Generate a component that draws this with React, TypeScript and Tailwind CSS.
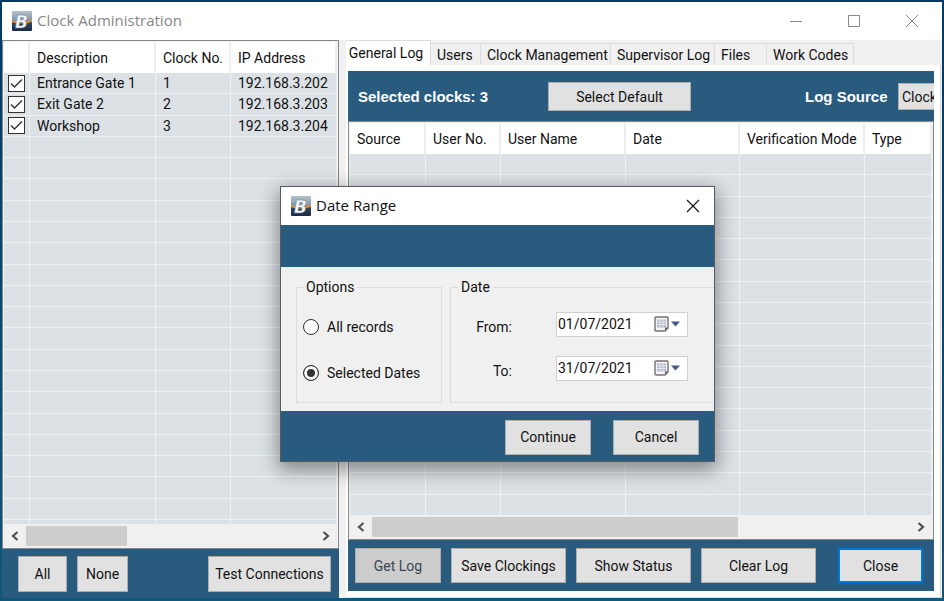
import { ReactNode } from "react";
import clsx from "clsx";

const clocks = [
  { name: "Entrance Gate 1", no: 1, ip: "192.168.3.202" },
  { name: "Exit Gate 2", no: 2, ip: "192.168.3.203" },
  { name: "Workshop", no: 3, ip: "192.168.3.204" },
];

const tabs = [
  { label: "Users", width: "w-[50px]" },
  { label: "Clock Management", width: "w-[130px]" },
  { label: "Supervisor Log", width: "w-[104px]" },
  { label: "Files", width: "w-[52px]" },
  { label: "Work Codes", width: "w-[87px]" },
];

const logColumns = [
  { label: "Source", width: "w-[76px]" },
  { label: "User No.", width: "w-[75px]" },
  { label: "User Name", width: "w-[125px]" },
  { label: "Date", width: "w-[114px]" },
  { label: "Verification Mode", width: "w-[125px]" },
  { label: "Type", width: "" },
];

const cell = "border-b border-r border-[#eef0f1] p-0";
const headCell =
  "h-[31px] border-r-2 border-[#eeeeee] bg-white p-0 pl-[7px] text-left font-normal";

const Logo = () => (
  <svg viewBox="0 0 20 20" className="size-5 shrink-0" aria-hidden="true">
    <defs>
      <linearGradient id="logo-bg" x1="0" y1="0" x2="0" y2="1">
        <stop offset="0" stopColor="#b4c3cd" />
        <stop offset="0.5" stopColor="#7d93a6" />
        <stop offset="0.62" stopColor="#2c4361" />
        <stop offset="1" stopColor="#1b2d47" />
      </linearGradient>
    </defs>
    <rect width="20" height="20" rx="1" fill="url(#logo-bg)" />
    <path d="M0 9.8 Q3 11.5 6 11.5 L14 11.5 Q17 11 20 9.2" stroke="#f08a24" strokeWidth="1.8" fill="none" />
    <text
      x="3"
      y="16.5"
      fontFamily="DejaVu Sans, sans-serif"
      fontSize="17"
      fontWeight="700"
      fontStyle="italic"
      fill="#f7fafc"
      stroke="#5f7488"
      strokeWidth="0.4"
    >
      B
    </text>
  </svg>
);

const CalendarIcon = () => (
  <svg viewBox="0 0 27 16" className="h-4 w-[27px] shrink-0" aria-hidden="true">
    <path d="M1 2 Q1 1 2 1 H13 Q14 1 14 2 V12 L11 15 H2 Q1 15 1 14 Z" fill="#f4f4f6" stroke="#7a6e6e" strokeWidth="1.4" />
    <path d="M3 3.5 H12 V11.5 H3 Z" fill="#b4bccb" />
    <path d="M3 6 H12 M3 8.5 H12 M6 3.5 V11.5 M9 3.5 V11.5" stroke="#eef0f5" strokeWidth="0.8" />
    <path d="M14 11.5 H11 V15 Z" fill="#6f6464" />
    <path d="M17 5.5 H26 L21.5 10.5 Z" fill="#41598c" />
  </svg>
);

type ButtonProps = {
  children: ReactNode;
  className?: string;
  disabled?: boolean;
  focused?: boolean;
};

const Button: React.FC<ButtonProps> = ({
  children,
  className,
  disabled,
  focused,
}) => (
  <button
    type="button"
    disabled={disabled}
    className={clsx(
      "flex shrink-0 items-center justify-center",
      disabled ? "bg-[#cccccc] text-[#3a4650]" : "bg-[#e1e1e1]",
      focused ? "border-2 border-[#0078d7]" : "border border-[#adadad]",
      className
    )}
  >
    {children}
  </button>
);

const Chevron = ({ left }: { left?: boolean }) => (
  <svg viewBox="0 0 8 10" className="h-[10px] w-2" aria-hidden="true">
    <path
      d={left ? "M6.5 1 L2 5 L6.5 9" : "M1.5 1 L6 5 L1.5 9"}
      fill="none"
      stroke="#505050"
      strokeWidth="2.2"
    />
  </svg>
);

type ScrollBarProps = {
  thumb: string;
};

const ScrollBar: React.FC<ScrollBarProps> = ({ thumb }) => (
  <div className="flex h-[22px] shrink-0 bg-[#f0f0f0] py-px">
    <button type="button" aria-label="Scroll left" className="flex w-[22px] items-center justify-center">
      <Chevron left />
    </button>
    <div className="flex-1">
      <div className={clsx("h-full bg-[#cdcdcd]", thumb)} />
    </div>
    <button type="button" aria-label="Scroll right" className="flex w-[22px] items-center justify-center">
      <Chevron />
    </button>
  </div>
);

const ClockList = () => (
  <section className="flex w-[337px] shrink-0 flex-col bg-[#295b7f]">
    <div className="flex min-h-0 flex-1 flex-col border border-[#828790] bg-[#f0f0f0] p-px">
      <div className="min-h-0 flex-1 overflow-hidden">
        <table className="h-full w-full table-fixed border-separate border-spacing-0 bg-[#dce1e5]">
          <thead>
            <tr>
              <th className={clsx(headCell, "w-[26px]")} />
              <th className={clsx(headCell, "w-[126px]")}>Description</th>
              <th className={clsx(headCell, "w-[75px]")}>Clock No.</th>
              <th className={headCell}>IP Address</th>
            </tr>
          </thead>
          <tbody>
            {clocks.map((clock) => (
              <tr key={clock.no} className="h-[21px]">
                <td className={cell}>
                  <label className="grid justify-center">
                    <input
                      type="checkbox"
                      defaultChecked
                      aria-label={clock.name}
                      className="peer col-start-1 row-start-1 size-[17px] appearance-none border border-[#333333] bg-white"
                    />
                    <svg viewBox="0 0 17 17" className="pointer-events-none invisible col-start-1 row-start-1 size-[17px] peer-checked:visible">
                      <path d="M3 8.5 L6.5 12 L14 4.5" fill="none" stroke="#333333" strokeWidth="1.4" />
                    </svg>
                  </label>
                </td>
                <td className={clsx(cell, "leading-5")}>
                  <span className="pl-[7px]">{clock.name}</span>
                </td>
                <td className={clsx(cell, "leading-5")}>
                  <span className="pl-[7px]">{clock.no}</span>
                </td>
                <td className={clsx(cell, "leading-5")}>
                  <span className="pl-[7px]">{clock.ip}</span>
                </td>
              </tr>
            ))}
            {Array.from({ length: 18 }, (_, i) => (
              <tr key={i} className="h-[21px]">
                <td className={cell} />
                <td className={cell} />
                <td className={cell} />
                <td className={cell} />
              </tr>
            ))}
            <tr className="h-[5px]">
              <td className={cell} />
              <td className={cell} />
              <td className={cell} />
              <td className={cell} />
            </tr>
          </tbody>
        </table>
      </div>
      <ScrollBar thumb="w-[35%]" />
    </div>
    <div className="flex shrink-0 gap-[10px] pt-[7px] pr-2 pb-[6px] pl-4">
      <Button className="h-9 w-[49px]">All</Button>
      <Button className="h-9 w-[51px]">None</Button>
      <Button className="ml-auto h-9 w-[123px]">Test Connections</Button>
    </div>
  </section>
);

const LogPanel = () => (
  <section className="flex min-w-0 flex-1 flex-col bg-[#f0f0f0] pr-px">
    <div role="tablist" className="flex h-[25px] shrink-0 items-end">
      <button
        type="button"
        role="tab"
        aria-selected="true"
        className="h-full w-[85px] border-t border-r border-[#dcdcdc] bg-white pr-1 leading-5"
      >
        General Log
      </button>
      {tabs.map((tab) => (
        <button
          key={tab.label}
          type="button"
          role="tab"
          aria-selected="false"
          className={clsx("h-[22px] border-t border-r border-[#dcdcdc] pl-[6px] text-left", tab.width)}
        >
          {tab.label}
        </button>
      ))}
    </div>
    <div className="flex min-h-0 flex-1 flex-col border-r border-b border-[#dcdcdc] bg-white pt-[6px] pr-[6px] pb-[6px] pl-[2px]">
      <div className="flex h-[50px] shrink-0 items-center overflow-hidden bg-[#295b7f] pt-px">
        <h2 className="w-[200px] shrink-0 pl-[10px] font-['Liberation_Sans',sans-serif] text-[15px] font-bold text-white">
          Selected clocks: 3
        </h2>
        <Button className="h-[29px] w-[143px]">Select Default</Button>
        <label
          htmlFor="log-source"
          className="ml-[114px] w-[93px] shrink-0 font-['Liberation_Sans',sans-serif] text-[15px] font-bold text-white"
        >
          Log Source
        </label>
        <select
          id="log-source"
          className="h-[27px] w-[140px] shrink-0 appearance-none border border-[#adadad] bg-[#e1e1e1] px-[3px]"
        >
          <option>Clock</option>
        </select>
      </div>
      <div className="flex min-h-0 flex-1 flex-col border border-[#828790] bg-[#f0f0f0] p-px">
        <div className="min-h-0 flex-1 overflow-hidden">
          <table className="h-full w-full table-fixed border-separate border-spacing-0 bg-[#dce1e5]">
            <thead>
              <tr>
                {logColumns.map((column) => (
                  <th key={column.label} className={clsx(headCell, column.width)}>
                    {column.label}
                  </th>
                ))}
              </tr>
            </thead>
            <tbody>
              {Array.from({ length: 17 }, (_, i) => (
                <tr key={i} className="h-[21px]">
                  {logColumns.map((column) => (
                    <td key={column.label} className={cell} />
                  ))}
                </tr>
              ))}
            </tbody>
          </table>
        </div>
        <ScrollBar thumb="w-[68%]" />
      </div>
      <div className="flex shrink-0 gap-[10px] bg-[#295b7f] pt-2 pr-[11px] pb-2 pl-[7px]">
        <Button disabled className="h-[35px] w-[86px]">Get Log</Button>
        <Button className="h-[35px] w-[115px]">Save Clockings</Button>
        <Button className="h-[35px] w-[115px]">Show Status</Button>
        <Button className="h-[35px] w-[115px]">Clear Log</Button>
        <Button focused className="ml-auto h-[35px] w-[85px]">Close</Button>
      </div>
    </div>
  </section>
);

type DateFieldProps = {
  id: string;
  label: string;
  value: string;
};

const DateField: React.FC<DateFieldProps> = ({ id, label, value }) => (
  <div className="flex items-center">
    <label htmlFor={id} className="w-[61px] pt-[6px] text-right">
      {label}
    </label>
    <div className="ml-11 flex h-[25px] w-[132px] items-center border border-[#d0d0d0] bg-white pr-[6px] pl-px">
      <input id={id} type="text" defaultValue={value} className="min-w-0 flex-1 outline-none" />
      <CalendarIcon />
    </div>
  </div>
);

type RadioProps = {
  label: string;
  checked?: boolean;
};

const Radio: React.FC<RadioProps> = ({ label, checked }) => (
  <label className="flex items-center gap-2">
    <input
      type="radio"
      name="range"
      defaultChecked={checked}
      className="size-4 shrink-0 appearance-none rounded-full border border-[#333333] bg-white checked:bg-[#333333] checked:shadow-[inset_0_0_0_3px_#ffffff]"
    />
    {label}
  </label>
);

const DateRangeDialog = () => (
  <div
    role="dialog"
    aria-label="Date Range"
    className="absolute top-[186px] left-[280px] flex w-[435px] flex-col overflow-hidden border border-[#555b61] bg-[#f0f0f0] shadow-[0_6px_18px_2px_rgba(0,0,0,0.4)]"
  >
    <header className="flex h-[38px] items-center gap-[5px] bg-white pr-[14px] pl-[10px]">
      <Logo />
      <h2 className="font-['Open_Sans',sans-serif] text-[15px]">Date Range</h2>
      <button type="button" aria-label="Close dialog" className="ml-auto">
        <svg viewBox="0 0 14 14" className="size-[14px]">
          <path d="M1 1 L13 13 M13 1 L1 13" stroke="#111111" strokeWidth="1.1" />
        </svg>
      </button>
    </header>
    <div className="h-[42px] bg-[#295b7f]" />
    <div className="flex gap-2 pt-3 pb-2 pl-[15px]">
      <fieldset className="h-[124px] w-[146px] shrink-0 border border-[#dcdcdc] pl-[6px]">
        <legend className="px-[3px] leading-4">Options</legend>
        <div className="flex flex-col gap-[26px] pt-[22px]">
          <Radio label="All records" />
          <Radio label="Selected Dates" checked />
        </div>
      </fieldset>
      <fieldset className="h-[124px] flex-1 border border-r-0 border-[#dcdcdc]">
        <legend className="ml-[7px] px-[3px] leading-4">Date</legend>
        <div className="flex flex-col gap-[18px] pt-4">
          <DateField id="from" label="From:" value="01/07/2021" />
          <DateField id="to" label="To:" value="31/07/2021" />
        </div>
      </fieldset>
    </div>
    <div className="flex h-[50px] items-center justify-end gap-[22px] bg-[#295b7f] pt-[2px] pr-[15px]">
      <Button className="h-[35px] w-[86px]">Continue</Button>
      <Button className="h-[35px] w-[86px]">Cancel</Button>
    </div>
  </div>
);

const App: React.FC = () => {
  return (
    <div className="relative flex h-screen flex-col overflow-hidden bg-linear-to-b from-[#003a66] to-[#12567a] px-[2px] pt-[2px] pb-[3px] font-[Roboto,sans-serif] text-sm text-[#111111]">
      <header className="flex h-[38px] shrink-0 items-center gap-[5px] bg-white pr-6 pl-[10px] text-[#888888]">
        <Logo />
        <h1 className="font-['Open_Sans',sans-serif] text-[15px]">Clock Administration</h1>
        <div className="ml-auto flex items-center gap-[46px]">
          <button type="button" aria-label="Minimize">
            <svg viewBox="0 0 12 12" className="size-3">
              <path d="M0 6.5 H12" stroke="#888888" />
            </svg>
          </button>
          <button type="button" aria-label="Maximize">
            <svg viewBox="0 0 12 12" className="size-3">
              <path d="M0.5 0.5 H11.5 V11.5 H0.5 Z" fill="none" stroke="#888888" />
            </svg>
          </button>
          <button type="button" aria-label="Close window">
            <svg viewBox="0 0 12 12" className="size-3">
              <path d="M0 0 L12 12 M12 0 L0 12" stroke="#888888" />
            </svg>
          </button>
        </div>
      </header>
      <main className="flex min-h-0 flex-1 gap-[7px] bg-[#f0f0f0]">
        <ClockList />
        <LogPanel />
      </main>
      <DateRangeDialog />
    </div>
  );
};

export default App;
